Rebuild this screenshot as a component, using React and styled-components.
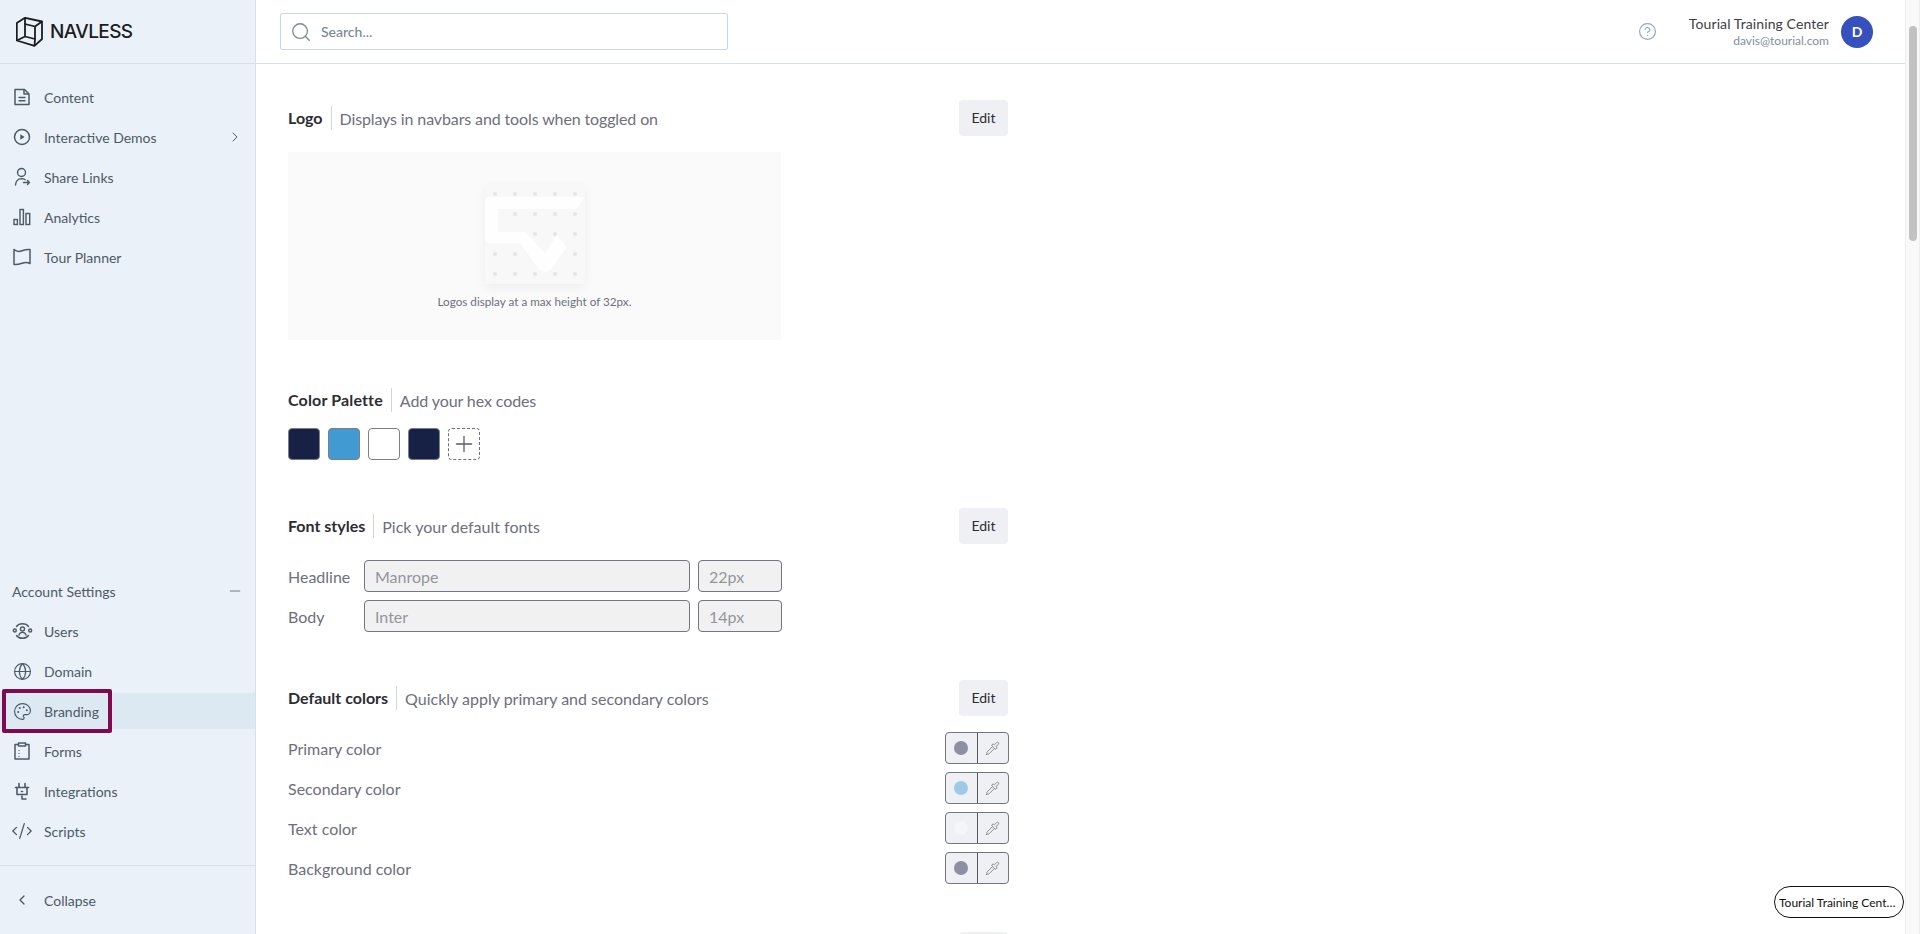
import React from 'react';
import styled, { createGlobalStyle } from 'styled-components';
import {
  ChevronRight, ChevronLeft, Globe, Palette, CodeXml, Minus, Plus, Search, CircleHelp, Pipette,
} from 'lucide-react';

const Global = createGlobalStyle`
  * { box-sizing: border-box; }
  html, body { margin: 0; height: 100%; overflow: hidden; background: #fff; }
  body { font-family: Lato, "Liberation Sans", sans-serif; color: #2c2d33; }
  #root { height: 100%; }
`;

const Shell = styled.div`
  display: flex;
  height: 934px;
  width: 1920px;
  position: relative;
  overflow: hidden;
`;

const Sidebar = styled.aside`
  width: 256px;
  flex: none;
  background: #eaf1f8;
  border-right: 1px solid #d5e0ea;
  display: flex;
  flex-direction: column;
`;

const Brand = styled.div`
  height: 64px;
  flex: none;
  border-bottom: 1px solid #d5e0ea;
  display: flex;
  align-items: center;
  gap: 7px;
  padding-left: 16px;
`;

const BrandName = styled.span`
  font-size: 19px;
  font-weight: 500;
  font-family: Inter, sans-serif;
  letter-spacing: -0.6px;
  color: #1c1d20;
`;

const NavList = styled.nav`
  display: flex;
  flex-direction: column;
  padding-top: 15px;
  flex: 1;
`;

const SettingsList = styled.div`
  display: flex;
  flex-direction: column;
  padding-bottom: 12px;
  border-bottom: 1px solid #d5e0ea;
`;

const NavRow = styled.div`
  height: 36px;
  margin-bottom: 4px;
  display: flex;
  align-items: center;
  gap: 12px;
  padding: 0 12px 0 12px;
  font-size: 14px;
  color: #4d5a66;
  background: ${(p) => (p.$active ? '#dde9f2' : 'transparent')};
  position: relative;
  svg { flex: none; }
`;

const IconSlot = styled.span`
  width: 20px;
  height: 20px;
  flex: none;
  display: flex;
  align-items: center;
  justify-content: center;
  color: #4d5a66;
`;

const NavLabel = styled.span`
  flex: 1;
`;

const SectionTitle = styled.div`
  height: 36px;
  margin-bottom: 4px;
  display: flex;
  align-items: center;
  justify-content: space-between;
  padding: 0 12px;
  font-size: 14px;
  color: #4d5a66;
`;

const Callout = styled.span`
  position: absolute;
  left: 2px;
  top: -4px;
  width: 110px;
  height: 44px;
  border: 4px solid #7f0a50;
  border-radius: 2px;
`;

const CollapseRow = styled(NavRow)`
  margin: 16px 0 16px;
`;

const Column = styled.div`
  flex: 1;
  min-width: 0;
  display: flex;
  flex-direction: column;
`;

const TopBar = styled.header`
  height: 64px;
  flex: none;
  border-bottom: 1px solid #d5e0ea;
  display: flex;
  align-items: center;
  justify-content: space-between;
  padding: 0 32px 0 24px;
`;

const SearchBox = styled.div`
  width: 448px;
  height: 37px;
  border: 1px solid #c9d8e4;
  border-radius: 2px;
  display: flex;
  align-items: center;
  gap: 9px;
  padding-left: 9px;
  font-size: 14px;
  font-weight: 500;
  color: #7a8795;
`;

const TopRight = styled.div`
  display: flex;
  align-items: center;
`;

const Account = styled.div`
  text-align: right;
  margin: 0 12px 0 32px;
`;

const AccountName = styled.div`
  font-size: 14px;
  line-height: 18px;
  letter-spacing: 0.1px;
  color: #3b4048;
`;

const AccountMail = styled.div`
  font-size: 12px;
  line-height: 16px;
  color: #7d8fa3;
`;

const Avatar = styled.div`
  width: 32px;
  height: 32px;
  border-radius: 50%;
  background: #3650bd;
  color: #fff;
  font-size: 14px;
  font-weight: 700;
  display: flex;
  align-items: center;
  justify-content: center;
`;

const Content = styled.main`
  flex: 1;
  overflow: hidden;
  padding: 36px 0 0 32px;
  width: 752px;
  box-sizing: content-box;
`;

const Section = styled.section`
  width: 720px;
  margin-bottom: ${(p) => p.$gap || 0}px;
`;

const SectionHead = styled.div`
  height: 36px;
  display: flex;
  align-items: center;
  justify-content: space-between;
`;

const HeadText = styled.div`
  display: flex;
  align-items: center;
  height: 24px;
`;

const HeadTitle = styled.span`
  font-size: 16px;
  font-weight: 700;
  letter-spacing: ${(p) => p.$track || 0}px;
  color: #2c2d33;
  padding-right: 8px;
  border-right: 1px solid #d3d4d9;
  line-height: 24px;
`;

const HeadHint = styled.span`
  font-size: 16px;
  letter-spacing: ${(p) => p.$track || 0}px;
  color: #6d6f7c;
  padding-left: 8px;
`;

const EditButton = styled.button`
  width: 49px;
  height: 36px;
  border: 0;
  border-radius: 4px;
  background: #eff0f3;
  font: inherit;
  font-size: 14px;
  color: #2c2d33;
  padding: 0 0 2px;
`;

const LogoPanel = styled.div`
  width: 493px;
  height: 188px;
  margin-top: 16px;
  background: #fafafa;
  display: flex;
  flex-direction: column;
  align-items: center;
  padding-top: 32px;
`;

const LogoCard = styled.div`
  width: 100px;
  height: 100px;
  background: #f8f8f9;
  box-shadow: 0 4px 10px rgba(0, 0, 0, 0.05);
  svg { display: block; }
`;

const LogoCaption = styled.div`
  margin-top: 9px;
  font-size: 11.7px;
  line-height: 16px;
  color: #6d6f7c;
`;

const Swatches = styled.div`
  display: flex;
  gap: 8px;
  margin-top: 10px;
`;

const Swatch = styled.div`
  width: 32px;
  height: 32px;
  border-radius: 4px;
  background: ${(p) => p.$color};
  border: 1px solid #7b7d8a;
`;

const AddSwatch = styled.div`
  width: 32px;
  height: 32px;
  border-radius: 4px;
  border: 1px dashed #6d6f7c;
  color: #5a5c68;
  display: flex;
  align-items: center;
  justify-content: center;
`;

const FontRow = styled.div`
  display: flex;
  align-items: center;
  gap: 8px;
  margin-top: ${(p) => p.$top}px;
`;

const RowLabel = styled.span`
  width: 68px;
  font-size: 16px;
  color: #6d6f7c;
`;

const Field = styled.div`
  width: ${(p) => p.$w}px;
  height: 32px;
  border: 1px solid #73757f;
  border-radius: 4px;
  background: #f1f1f2;
  display: flex;
  align-items: center;
  padding-left: 10px;
  font-size: 16px;
  color: #94959b;
`;

const ColorRow = styled.div`
  display: flex;
  align-items: center;
  justify-content: space-between;
  height: 32px;
  margin-top: ${(p) => p.$top}px;
  width: 721px;
`;

const ColorLabel = styled.span`
  font-size: 16px;
  color: #6d6f7c;
`;

const ColorControl = styled.div`
  display: flex;
  width: 64px;
  height: 32px;
  border: 1px solid #73757f;
  border-radius: 4px;
  background: #eff0f3;
`;

const ColorCell = styled.div`
  flex: 1;
  display: flex;
  align-items: center;
  justify-content: center;
  color: #77787f;
  & + & { border-left: 1px solid #55565f; }
`;

const Dot = styled.span`
  width: 14px;
  height: 14px;
  border-radius: 50%;
  background: ${(p) => p.$color};
`;

const ScrollTrack = styled.div`
  width: 15px;
  flex: none;
  background: #f9f9f9;
  border-left: 1px solid #ededed;
  border-right: 1px solid #ededed;
  padding: 26px 2px 0 3px;
`;

const ScrollThumb = styled.div`
  height: 215px;
  border-radius: 4px;
  background: #c2c2c2;
`;

const Pill = styled.div`
  position: absolute;
  left: 1774px;
  top: 886px;
  width: 130px;
  height: 32px;
  border: 1px solid #111;
  border-radius: 16px;
  background: #fff;
  display: flex;
  align-items: center;
  padding: 0 7px 0 4px;
  font-size: 12px;
  color: #111;
  white-space: nowrap;
`;

const PillText = styled.span`
  overflow: hidden;
  text-overflow: ellipsis;
`;

const BrandMark = () => (
  <svg width="27" height="30" viewBox="0 0 27 30" fill="none" stroke="#1c1d20" strokeWidth="1.8" strokeLinejoin="round">
    <path d="M.8 6 9 .8 26 4.500V22L18.500 28.800.8 23.500Z" />
    <path d="M9 7 19 9.500V22L9 19.500Z" />
    <path d="M9 .8V7M26 4.500 19 9.500M19 22 18.500 28.800M.8 23.500 9 19.500" />
  </svg>
);

const DocIcon = () => (
  <svg width="18" height="18" viewBox="0 0 18 18" fill="none" stroke="#4d5a66" strokeWidth="1.5" strokeLinejoin="round">
    <path d="M2 1.500H11.500L16 6V16.500H2Z" />
    <path d="M11 1.500V6H16" />
    <path d="M5.500 9.500H12.500M5.500 12.800H12.500" />
  </svg>
);

const PlayIcon = () => (
  <svg width="18" height="18" viewBox="0 0 18 18" fill="none">
    <circle cx="9" cy="9" r="7.500" stroke="#4d5a66" strokeWidth="1.5" />
    <path d="M7.300 6.300 11.700 9 7.300 11.700Z" fill="#4d5a66" />
  </svg>
);

const ShareIcon = () => (
  <svg width="20" height="20" viewBox="0 0 20 20" fill="none" stroke="#4d5a66" strokeWidth="1.4" strokeLinecap="round" strokeLinejoin="round">
    <circle cx="9.500" cy="5.500" r="4" />
    <path d="M3.500 18C3.800 14 6 11.800 9.500 11.600C11 11.600 12.200 12 13.200 12.700" />
    <path d="M11.500 15.500H17.500M15.500 13.500 17.500 15.500 15.500 17.500" />
  </svg>
);

const BarsIcon = () => (
  <svg width="18" height="18" viewBox="0 0 18 18" fill="none" stroke="#4d5a66" strokeWidth="1.4">
    <rect x="1" y="11.500" width="3.400" height="5" />
    <rect x="7" y="1.500" width="3.400" height="15" />
    <rect x="13" y="5.500" width="3.700" height="11" />
  </svg>
);

const MapIcon = () => (
  <svg width="18" height="18" viewBox="0 0 18 18" fill="none" stroke="#4d5a66" strokeWidth="1.5" strokeLinejoin="round">
    <path d="M1 1.500Q4.500 4.500 9 2.800T17 1.500V15.500Q13.500 13.500 9 15.200T1 16.500Z" />
  </svg>
);

const UsersIcon = () => (
  <svg width="21" height="20" viewBox="0 0 21 20" fill="none" stroke="#4d5a66" strokeWidth="1.4" strokeLinecap="round">
    <circle cx="10.500" cy="8" r="2" />
    <path d="M7 14c.6-2 2-2.600 3.500-2.600S13.400 12 14 14" />
    <circle cx="2.800" cy="9.500" r="1.500" />
    <circle cx="18.200" cy="9.500" r="1.500" />
    <path d="M4.500 5.500C7 1.800 14 1.800 16.500 5.500" />
    <path d="M4.500 14.500C7 18.200 14 18.200 16.500 14.500" />
  </svg>
);

const ClipIcon = () => (
  <svg width="18" height="18" viewBox="0 0 18 18" fill="none" stroke="#4d5a66" strokeWidth="1.5" strokeLinejoin="round">
    <path d="M5.500 2.500H2V17H16V2.500H12.500" />
    <rect x="5.500" y="1" width="7" height="3" />
    <path d="M6 8V8.800M6 11V11.800M6 14V14.800" />
  </svg>
);

const PlugIcon = () => (
  <svg width="20" height="20" viewBox="0 0 20 20" fill="none" stroke="#4d5a66" strokeWidth="1.6" strokeLinecap="round" strokeLinejoin="round">
    <path d="M7 2.500V6M13 2.500V6" />
    <path d="M3.500 6.500H16.500" />
    <path d="M5 6.500V13.500H15V6.500" />
    <path d="M10 15V18H14" />
    <path d="M9.500 10.500H10.500" />
  </svg>
);

const LogoPlaceholder = () => {
  const dots = [];
  for (let row = 0; row < 5; row++) {
    for (let col = 0; col < 5; col++) {
      dots.push(<circle key={`${row}-${col}`} cx={10 + col * 20} cy={10 + row * 20} r="2" fill="#e5e5e7" />);
    }
  }
  return (
    <svg width="100" height="100" viewBox="0 0 100 100">
      {dots}
      <path
        d="M4 13H100L91 25H13V48H40L60 69L72 51L82 63L66 85Q60 91 54 85L35 59H6Q0 59 0 53V19Q0 13 4 13Z"
        fill="#fefefe"
      />
    </svg>
  );
};

const mainNav = [
  { label: 'Content', icon: <DocIcon /> },
  { label: 'Interactive Demos', icon: <PlayIcon />, more: true },
  { label: 'Share Links', icon: <ShareIcon /> },
  { label: 'Analytics', icon: <BarsIcon /> },
  { label: 'Tour Planner', icon: <MapIcon /> },
];

const settingsNav = [
  { label: 'Users', icon: <UsersIcon /> },
  { label: 'Domain', icon: <Globe size={19} strokeWidth={1.5} /> },
  { label: 'Branding', icon: <Palette size={19} strokeWidth={1.5} />, active: true },
  { label: 'Forms', icon: <ClipIcon /> },
  { label: 'Integrations', icon: <PlugIcon /> },
  { label: 'Scripts', icon: <CodeXml size={22} strokeWidth={1.4} /> },
];

const palette = ['#172145', '#429ad3', '#ffffff', '#172145'];

const defaultColors = [
  { label: 'Primary color', color: '#8d90a3' },
  { label: 'Secondary color', color: '#9ecae8' },
  { label: 'Text color', color: '#f5f6f9' },
  { label: 'Background color', color: '#8d90a3' },
];

function Heading({ title, hint, edit, titleTrack, hintTrack }) {
  return (
    <SectionHead>
      <HeadText>
        <HeadTitle $track={titleTrack}>{title}</HeadTitle>
        <HeadHint $track={hintTrack}>{hint}</HeadHint>
      </HeadText>
      {edit && <EditButton>Edit</EditButton>}
    </SectionHead>
  );
}

export default function App() {
  return (
    <Shell>
      <Global />
      <Sidebar>
        <Brand>
          <BrandMark />
          <BrandName>NAVLESS</BrandName>
        </Brand>
        <NavList>
          {mainNav.map((item) => (
            <NavRow key={item.label}>
              <IconSlot>{item.icon}</IconSlot>
              <NavLabel>{item.label}</NavLabel>
              {item.more && <ChevronRight size={16} strokeWidth={1.5} />}
            </NavRow>
          ))}
        </NavList>
        <SettingsList>
          <SectionTitle>
            Account Settings
            <Minus size={16} strokeWidth={1.8} color="#6c7a87" />
          </SectionTitle>
          {settingsNav.map((item) => (
            <NavRow key={item.label} $active={item.active}>
              <IconSlot>{item.icon}</IconSlot>
              <NavLabel>{item.label}</NavLabel>
              {item.active && <Callout />}
            </NavRow>
          ))}
        </SettingsList>
        <CollapseRow>
          <IconSlot><ChevronLeft size={16} strokeWidth={2} /></IconSlot>
          <NavLabel>Collapse</NavLabel>
        </CollapseRow>
      </Sidebar>
      <Column>
        <TopBar>
          <SearchBox>
            <Search size={22} strokeWidth={1.5} color="#7d8c9c" />
            Search...
          </SearchBox>
          <TopRight>
            <CircleHelp size={19} strokeWidth={1.5} color="#8fa9c2" />
            <Account>
              <AccountName>Tourial Training Center</AccountName>
              <AccountMail>davis@tourial.com</AccountMail>
            </Account>
            <Avatar>D</Avatar>
          </TopRight>
        </TopBar>
        <Content>
          <Section $gap={42}>
            <Heading title="Logo" hint="Displays in navbars and tools when toggled on" hintTrack={-0.12} edit />
            <LogoPanel>
              <LogoCard><LogoPlaceholder /></LogoCard>
              <LogoCaption>Logos display at a max height of 32px.</LogoCaption>
            </LogoPanel>
          </Section>
          <Section $gap={48}>
            <Heading title="Color Palette" hint="Add your hex codes" titleTrack={0.15} hintTrack={-0.1} />
            <Swatches>
              {palette.map((color, i) => <Swatch key={i} $color={color} />)}
              <AddSwatch><Plus size={26} strokeWidth={1.2} /></AddSwatch>
            </Swatches>
          </Section>
          <Section $gap={48}>
            <Heading title="Font styles" hint="Pick your default fonts" edit />
            <FontRow $top={16}>
              <RowLabel>Headline</RowLabel>
              <Field $w={326}>Manrope</Field>
              <Field $w={84}>22px</Field>
            </FontRow>
            <FontRow $top={8}>
              <RowLabel>Body</RowLabel>
              <Field $w={326}>Inter</Field>
              <Field $w={84}>14px</Field>
            </FontRow>
          </Section>
          <Section $gap={48}>
            <Heading title="Default colors" hint="Quickly apply primary and secondary colors" edit />
            {defaultColors.map((row, i) => (
              <ColorRow key={row.label} $top={i === 0 ? 16 : 8}>
                <ColorLabel>{row.label}</ColorLabel>
                <ColorControl>
                  <ColorCell><Dot $color={row.color} /></ColorCell>
                  <ColorCell><Pipette size={15} strokeWidth={1.3} /></ColorCell>
                </ColorControl>
              </ColorRow>
            ))}
          </Section>
          <Section>
            <SectionHead>
              <span />
              <EditButton />
            </SectionHead>
          </Section>
        </Content>
      </Column>
      <ScrollTrack><ScrollThumb /></ScrollTrack>
      <Pill><PillText>Tourial Training Center</PillText></Pill>
    </Shell>
  );
}
